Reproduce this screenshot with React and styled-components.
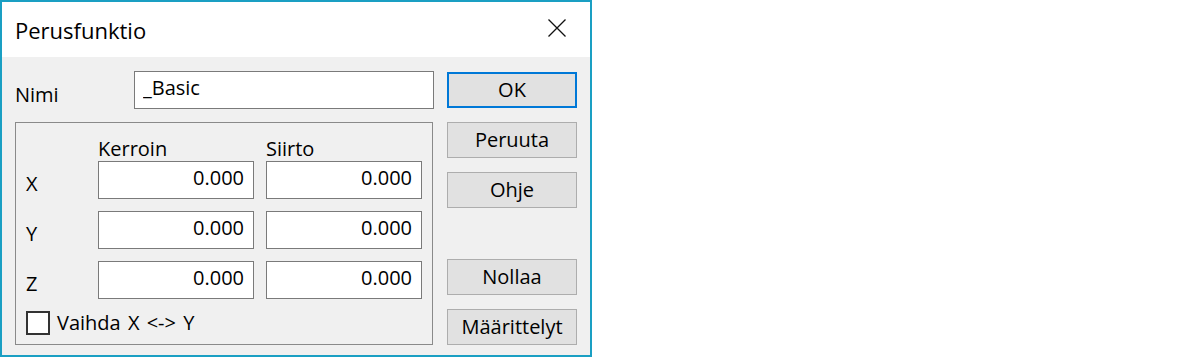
import React from "react";
import styled, { createGlobalStyle } from "styled-components";

const GlobalStyle = createGlobalStyle`
  html, body {
    margin: 0;
    padding: 0;
    background: #ffffff;
  }
  body {
    font-family: "Open Sans", "Noto Sans", sans-serif;
  }
`;

const Window = styled.div`
  width: 592px;
  height: 357px;
  box-sizing: border-box;
  border: 2px solid #1a9fc3;
  background: #f0f0f0;
  display: flex;
  flex-direction: column;
  font-family: "Open Sans", "Noto Sans", sans-serif;
  font-size: 20px;
  color: #000;
`;

const TitleBar = styled.div`
  height: 55px;
  flex: none;
  background: #ffffff;
  display: flex;
`;

const Title = styled.div`
  flex: 1;
  padding: 2px 0 0 13px;
  line-height: 53px;
  font-size: 22px;
`;

const CloseButton = styled.div`
  width: 66px;
  display: flex;
  justify-content: center;
  align-items: flex-start;
  padding-top: 17px;
  box-sizing: border-box;
`;

const Body = styled.div`
  flex: 1;
  display: flex;
  gap: 13px;
  padding: 14px 13px 10px;
`;

const LeftColumn = styled.div`
  width: 419px;
  display: flex;
  flex-direction: column;
`;

const NameRow = styled.div`
  display: flex;
  height: 38px;
`;

const NameLabel = styled.label`
  width: 119px;
  align-self: flex-end;
  line-height: 24px;
  margin-bottom: 2px;
`;

const TextField = styled.input`
  width: ${(p) => p.$width}px;
  height: 38px;
  box-sizing: border-box;
  margin: 0;
  border: 1px solid #7a7a7a;
  background: #ffffff;
  font: inherit;
  color: #000;
  padding: 0 ${(p) => (p.$numeric ? 9 : 8)}px 5px;
  text-align: ${(p) => (p.$numeric ? "right" : "left")};
  outline: none;
`;

const GroupBox = styled.fieldset`
  margin: 13px 0 0;
  width: 418px;
  box-sizing: border-box;
  border: 1px solid #8a8a8a;
  padding: 14px 10px 9px;
  display: flex;
  flex-direction: column;
  gap: 12px;
`;

const FieldRow = styled.div`
  display: grid;
  grid-template-columns: 60px 156px 156px;
  column-gap: 12px;
  height: ${(p) => p.$height}px;
`;

const HeaderRow = styled(FieldRow)`
  margin-bottom: -12px;
  line-height: 24px;
`;

const ColumnHead = styled.span`
  align-self: end;
`;

const AxisLabel = styled.span`
  align-self: end;
  line-height: 24px;
  margin-bottom: 3px;
`;

const CheckRow = styled.label`
  display: flex;
  align-items: center;
  gap: 7px;
  height: 24px;
  line-height: 24px;
  word-spacing: 2px;
`;

const CheckBox = styled.input.attrs({ type: "checkbox" })`
  appearance: none;
  margin: 0;
  width: 24px;
  height: 24px;
  box-sizing: border-box;
  border: 2px solid #333333;
  background: #ffffff;
`;

const ButtonColumn = styled.div`
  width: 130px;
  display: flex;
  flex-direction: column;
  gap: 14px;
  padding-top: 1px;
`;

const Button = styled.button`
  height: 36px;
  margin: 0;
  margin-top: ${(p) => (p.$pushDown ? "auto" : "0")};
  box-sizing: border-box;
  border: ${(p) => (p.$default ? "2px solid #0078d7" : "1px solid #adadad")};
  background: #e1e1e1;
  font: inherit;
  color: #000;
  padding: 0;
  line-height: 1;
`;

const rows = [
  { axis: "X", factor: "0.000", offset: "0.000" },
  { axis: "Y", factor: "0.000", offset: "0.000" },
  { axis: "Z", factor: "0.000", offset: "0.000" },
];

export default function App() {
  return (
    <>
      <GlobalStyle />
      <Window>
        <TitleBar>
          <Title>Perusfunktio</Title>
          <CloseButton>
            <svg width="18" height="18" viewBox="0 0 18 18">
              <path d="M0.5 0.5 L17.5 17.5 M17.5 0.5 L0.5 17.5" stroke="#111" strokeWidth="1.3" fill="none" />
            </svg>
          </CloseButton>
        </TitleBar>
        <Body>
          <LeftColumn>
            <NameRow>
              <NameLabel>Nimi</NameLabel>
              <TextField $width={300} readOnly value="_Basic" />
            </NameRow>
            <GroupBox>
              <HeaderRow $height={24}>
                <span />
                <ColumnHead>Kerroin</ColumnHead>
                <ColumnHead>Siirto</ColumnHead>
              </HeaderRow>
              {rows.map((r) => (
                <FieldRow key={r.axis} $height={38}>
                  <AxisLabel>{r.axis}</AxisLabel>
                  <TextField $width={156} $numeric readOnly value={r.factor} />
                  <TextField $width={156} $numeric readOnly value={r.offset} />
                </FieldRow>
              ))}
              <CheckRow>
                <CheckBox />
                <span>Vaihda X &lt;-&gt; Y</span>
              </CheckRow>
            </GroupBox>
          </LeftColumn>
          <ButtonColumn>
            <Button $default>OK</Button>
            <Button>Peruuta</Button>
            <Button>Ohje</Button>
            <Button $pushDown>Nollaa</Button>
            <Button>Määrittelyt</Button>
          </ButtonColumn>
        </Body>
      </Window>
    </>
  );
}
